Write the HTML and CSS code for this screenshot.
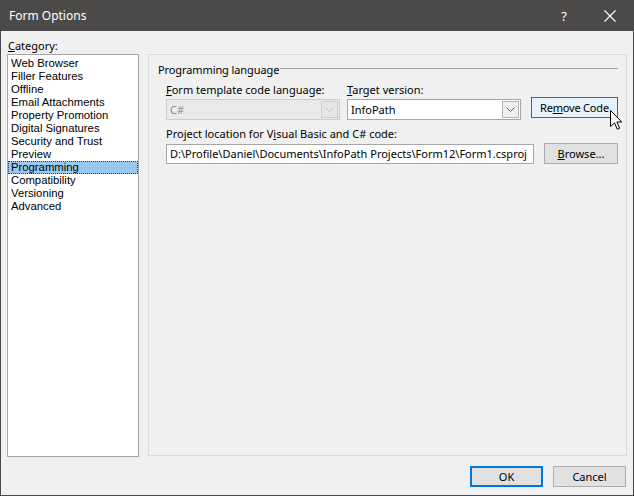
FILE: index.html
```html
<!DOCTYPE html>
<html>
<head>
<meta charset="utf-8">
<title>Form Options</title>
<link rel="stylesheet" href="styles.css">
</head>
<body>
<div class="window">
  <div class="titlebar">
    <span class="title">Form Options</span>
    <span class="help">?</span>
    <span class="close"><svg width="12" height="12" viewBox="0 0 12 12"><path d="M0.5 0.5 L11.5 11.5 M11.5 0.5 L0.5 11.5" stroke="#fff" stroke-width="1.1" fill="none"/></svg></span>
  </div>
  <div class="body">
    <div class="cat-label"><u>C</u>ategory:</div>
    <ul class="listbox">
      <li>Web Browser</li>
      <li>Filler Features</li>
      <li>Offline</li>
      <li>Email Attachments</li>
      <li>Property Promotion</li>
      <li>Digital Signatures</li>
      <li>Security and Trust</li>
      <li>Preview</li>
      <li class="selected">Programming</li>
      <li>Compatibility</li>
      <li>Versioning</li>
      <li>Advanced</li>
    </ul>
    <div class="panel">
      <div class="group-head"><span>Programming language</span><span class="rule"></span></div>
      <div class="fields">
        <div class="row">
          <div class="field">
            <div class="label"><u>F</u>orm template code language:</div>
            <div class="combo disabled"><span class="value">C#</span><span class="arrow"><svg width="9" height="5" viewBox="0 0 9 5"><path d="M0.5 0.5 L4.5 4.5 L8.5 0.5" stroke="#c2c2c2" fill="none"/></svg></span></div>
          </div>
          <div class="field">
            <div class="label"><u>T</u>arget version:</div>
            <div class="combo"><span class="value">InfoPath</span><span class="arrow"><svg width="9" height="5" viewBox="0 0 9 5"><path d="M0.5 0.5 L4.5 4.5 L8.5 0.5" stroke="#606060" fill="none"/></svg></span></div>
          </div>
          <button class="btn btn-remove">Re<u>m</u>ove Code</button>
        </div>
        <div class="row row2">
          <div class="field wide">
            <div class="label label2">Project location for V<u>i</u>sual Basic and C# code:</div>
            <div class="textbox">D:\Profile\Daniel\Documents\InfoPath Projects\Form12\Form1.csproj</div>
          </div>
          <button class="btn btn-browse"><u>B</u>rowse...</button>
        </div>
      </div>
    </div>
  </div>
  <div class="footer">
    <button class="btn btn-default">OK</button>
    <button class="btn">Cancel</button>
  </div>
  <svg class="cursor" width="13" height="21" viewBox="0 0 13 21"><path d="M0.5 0.5 L0.5 16.5 L4.5 12.8 L7.3 19.3 L9.6 18.3 L6.9 12 L11.8 12 Z" fill="#fff" stroke="#000" stroke-width="1" stroke-linejoin="miter"/></svg>
</div>
</body>
</html>
```
FILE: styles.css
```css
* { box-sizing: border-box; }
html, body { margin: 0; padding: 0; }
body {
  font-family: "Noto Sans", "Liberation Sans", sans-serif;
  font-size: 11px;
  color: #000;
}
.window {
  position: relative;
  width: 634px;
  height: 496px;
  background: #f0f0f0;
  border: 1px solid #4b4a48;
  border-top: none;
  display: flex;
  flex-direction: column;
  overflow: hidden;
}
.titlebar {
  height: 31px;
  flex: none;
  background: #4b4a48;
  color: #fff;
  display: flex;
  align-items: center;
  font-size: 12px;
}
.title { margin-left: 8px; flex: 1; }
.help { width: 46px; text-align: center; margin-right: 0; font-size: 13px; }
.close { width: 46px; display: flex; justify-content: center; }

.body {
  display: grid;
  grid-template-columns: 132px 479px;
  grid-template-rows: 16px 402px;
  column-gap: 9px;
  padding: 7px 6px 0 6px;
}
.cat-label { grid-column: 1; grid-row: 1; line-height: 15px; padding-left: 1px; }
.listbox {
  grid-column: 1; grid-row: 2;
  list-style: none;
  margin: 0;
  padding: 2px 0 0 0;
  background: #fff;
  border: 1px solid #a6a6a6;
  height: 403px;
}
.listbox li {
  height: 13px;
  line-height: 13px;
  padding-left: 3px;
  white-space: nowrap;
  font-family: "Liberation Sans", Arial, sans-serif;
  font-size: 11.3px;
}
.listbox li.selected {
  background: #99c9ef;
  outline: 1px dotted #3a3a3a;
  outline-offset: -1px;
}
.panel {
  grid-column: 2; grid-row: 2;
  border: 1px solid #dadada;
  padding: 7px 8px 0 9px;
}
.group-head {
  display: flex;
  height: 15px;
  line-height: 15px;
  letter-spacing: -0.1px;
}
.group-head .rule {
  flex: 1;
  height: 1px;
  background: #a0a0a0;
  margin-top: 6px;
  margin-left: 1px;
}
.fields { padding-left: 8px; margin-top: 5px; }
.row { display: flex; gap: 0; }
.field { width: 174px; display: flex; flex-direction: column; }
.field + .field { margin-left: 7px; }
.label { line-height: 15px; margin-bottom: 2px; white-space: nowrap; }
.label2 { margin-bottom: 3px; }
.row2 { margin-top: 6px; }
.field.wide { width: 368px; }

.combo {
  height: 21px;
  border: 1px solid #a6a6a6;
  background: #fff;
  display: flex;
  align-items: center;
}
.combo .value { flex: 1; padding-left: 3px; }
.combo .arrow {
  width: 17px; height: 17px;
  margin-right: 1px;
  border: 1px solid #b4b4b4;
  background: #efefef;
  display: flex; align-items: center; justify-content: center;
}
.combo.disabled { background: #eaeaea; border-color: #cccccc; color: #8a8a8a; }
.combo.disabled .arrow { border-color: #cfcfcf; background: #e6e6e6; }

.btn {
  font: inherit;
  color: #000;
  height: 21px;
  padding: 0;
  background: #e1e1e1;
  border: 1px solid #adadad;
  line-height: 17px;
}
.btn-remove {
  width: 87px;
  margin-left: 10px;
  align-self: flex-end;
  margin-bottom: 2px;
  background: #e5f1fb;
  border-color: #0078d7;
  letter-spacing: -0.2px;
}
.btn-browse { width: 74px; margin-left: 10px; align-self: flex-end; }
.textbox {
  height: 20px;
  border: 1px solid #a6a6a6;
  background: #fff;
  line-height: 18px;
  padding-left: 3px;
  white-space: nowrap;
  overflow: hidden;
}
.footer {
  display: flex;
  justify-content: flex-end;
  gap: 10px;
  padding: 10px 7px 0 0;
}
.footer .btn { width: 73px; }
.btn-default { border: 2px solid #0078d7; }
.cursor { position: absolute; left: 609px; top: 110px; }
```
